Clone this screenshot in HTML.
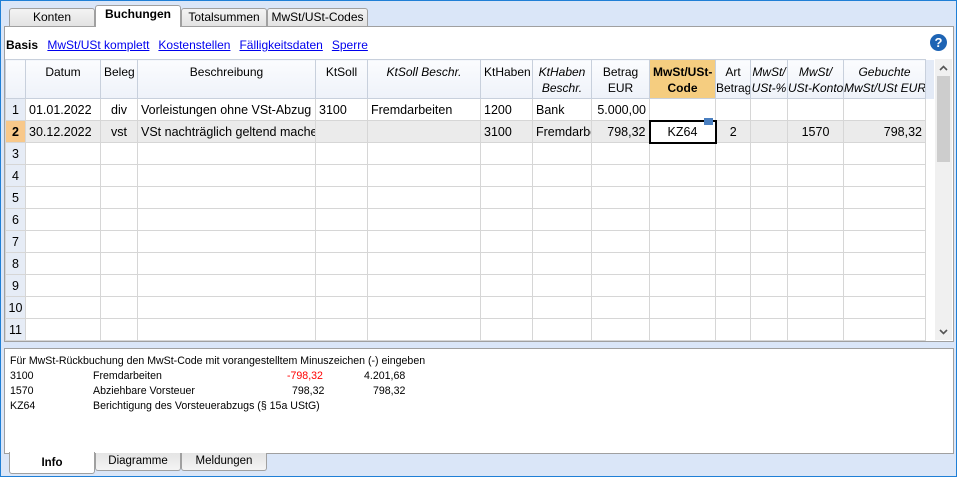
<!DOCTYPE html>
<html><head><meta charset="utf-8"><style>
*{box-sizing:border-box;margin:0;padding:0}
body{width:957px;height:477px;background:#dae6f8;font-family:"Liberation Sans",sans-serif;font-size:12px;color:#000;position:relative;overflow:hidden;border:1px solid #1f7fd6}
.tab{position:absolute;top:7px;height:19px;border:1px solid #a0a0a0;border-bottom:none;background:linear-gradient(#f4f4f4,#e2e2e2);border-radius:3px 3px 0 0;text-align:center;font-size:12px;line-height:17px}
.tab.act{top:4px;height:22px;background:#fff;font-weight:bold;z-index:2}
#main{position:absolute;left:3px;top:25px;width:950px;height:316px;background:#fff;border:1px solid #a0a0a0}
.links{position:absolute;left:5px;top:37px;font-size:12px}
.links b{margin-right:6px}
.links a{color:#0000ee;text-decoration:underline;margin-right:9px}
.help{position:absolute;left:929px;top:33px;width:17px;height:17px;border-radius:50%;background:#1e64b4;color:#fff;font-weight:bold;font-size:13px;text-align:center;line-height:17px}
table{position:absolute;left:4px;top:58px;border-collapse:collapse;table-layout:fixed;width:929px}
td,th{border:1px solid #d6d6d6;height:22px;padding:0 3px;white-space:nowrap;overflow:hidden;font-size:12.5px}
th{height:39px;font-weight:normal;background:linear-gradient(#fbfcfe,#eef2f9);border-color:#c8d0dc;vertical-align:top;padding-top:4px;font-size:12px;line-height:16px}
th.i{font-style:italic}
th.o{background:#f5cd80;font-weight:bold}
td.n{background:#e6ecf6;text-align:center;border-color:#d6d6d6;padding:0}
tr.r2 td{background:#ebebeb}
tr.r2 td.n{background:#f8c88a;font-weight:bold}
.c{text-align:center}.r{text-align:right}
td.sel{background:#fff!important;border:2px solid #000;text-align:center}
#sb{position:absolute;left:934px;top:58px;width:17px;height:281px;background:#f0f0f0}
#thumb{position:absolute;left:936px;top:75px;width:13px;height:86px;background:#cdcdcd}
#info{position:absolute;left:3px;top:347px;width:950px;height:106px;background:#fff;border:1px solid #a0a0a0;font-size:10.6px}
#info div{position:absolute;white-space:nowrap}
.bt{position:absolute;z-index:3;top:452px;height:18px;border:1px solid #a0a0a0;border-top:none;background:linear-gradient(#e4e4e4,#f4f4f4);border-radius:0 0 3px 3px;text-align:center;font-size:11.5px;line-height:16px}
.bt.act{background:#fff;font-weight:bold;top:451px;height:22px;line-height:22px;border-top:none}
</style></head><body>
<div class="tab" style="left:8px;width:86px">Konten</div>
<div class="tab act" style="left:94px;width:86px">Buchungen</div>
<div class="tab" style="left:180px;width:86px">Totalsummen</div>
<div class="tab" style="left:266px;width:101px">MwSt/USt-Codes</div>
<div id="main"></div>
<div class="links"><b>Basis</b> <a>MwSt/USt komplett</a><a>Kostenstellen</a><a>Fälligkeitsdaten</a><a>Sperre</a></div>
<div class="help">?</div>
<table>
<colgroup><col style="width:20px"><col style="width:75px"><col style="width:37px"><col style="width:178px"><col style="width:52px"><col style="width:113px"><col style="width:52px"><col style="width:59px"><col style="width:58px"><col style="width:66px"><col style="width:35px"><col style="width:37px"><col style="width:56px"><col style="width:82px"><col style="width:9px"></colgroup>
<tr><th></th><th>Datum</th><th>Beleg</th><th>Beschreibung</th><th>KtSoll</th><th class="i">KtSoll Beschr.</th><th>KtHaben</th><th class="i">KtHaben<br>Beschr.</th><th>Betrag<br>EUR</th><th class="o">MwSt/USt-<br>Code</th><th style="padding:4px 0 0">Art<br>Betrag</th><th class="i" style="padding:4px 0 0">MwSt/<br>USt-%</th><th class="i" style="padding:4px 0 0">MwSt/<br>USt-Konto</th><th class="i" style="padding:4px 0 0">Gebuchte<br>MwSt/USt EUR</th><th style="border:none;background:#e3eaf6"></th></tr>
<tr><td class="n">1</td><td>01.01.2022</td><td class="c">div</td><td>Vorleistungen ohne VSt-Abzug</td><td>3100</td><td>Fremdarbeiten</td><td>1200</td><td>Bank</td><td class="r">5.000,00</td><td></td><td></td><td></td><td></td><td></td><td style="border:none"></td></tr>
<tr class="r2"><td class="n">2</td><td>30.12.2022</td><td class="c">vst</td><td>VSt nachträglich geltend machen</td><td></td><td></td><td>3100</td><td>Fremdarbeiten</td><td class="r">798,32</td><td class="sel">KZ64</td><td class="c">2</td><td></td><td class="c">1570</td><td class="r">798,32</td><td style="border:none;background:#fff"></td></tr>
<tr><td class="n">3</td><td></td><td></td><td></td><td></td><td></td><td></td><td></td><td></td><td></td><td></td><td></td><td></td><td></td><td style="border:none"></td></tr>
<tr><td class="n">4</td><td></td><td></td><td></td><td></td><td></td><td></td><td></td><td></td><td></td><td></td><td></td><td></td><td></td><td style="border:none"></td></tr>
<tr><td class="n">5</td><td></td><td></td><td></td><td></td><td></td><td></td><td></td><td></td><td></td><td></td><td></td><td></td><td></td><td style="border:none"></td></tr>
<tr><td class="n">6</td><td></td><td></td><td></td><td></td><td></td><td></td><td></td><td></td><td></td><td></td><td></td><td></td><td></td><td style="border:none"></td></tr>
<tr><td class="n">7</td><td></td><td></td><td></td><td></td><td></td><td></td><td></td><td></td><td></td><td></td><td></td><td></td><td></td><td style="border:none"></td></tr>
<tr><td class="n">8</td><td></td><td></td><td></td><td></td><td></td><td></td><td></td><td></td><td></td><td></td><td></td><td></td><td></td><td style="border:none"></td></tr>
<tr><td class="n">9</td><td></td><td></td><td></td><td></td><td></td><td></td><td></td><td></td><td></td><td></td><td></td><td></td><td></td><td style="border:none"></td></tr>
<tr><td class="n">10</td><td></td><td></td><td></td><td></td><td></td><td></td><td></td><td></td><td></td><td></td><td></td><td></td><td></td><td style="border:none"></td></tr>
<tr><td class="n">11</td><td></td><td></td><td></td><td></td><td></td><td></td><td></td><td></td><td></td><td></td><td></td><td></td><td></td><td style="border:none"></td></tr>
</table>
<div style="position:absolute;left:703px;top:117px;width:9px;height:7px;background:#4a7fc0"></div>
<div id="sb"></div><div id="thumb"></div>
<svg style="position:absolute;left:938px;top:64px" width="9" height="6"><path d="M1 5L4.5 1.5L8 5" stroke="#555" stroke-width="1.6" fill="none"/></svg>
<svg style="position:absolute;left:938px;top:328px" width="9" height="6"><path d="M1 1L4.5 4.5L8 1" stroke="#555" stroke-width="1.6" fill="none"/></svg>
<div id="info">
<div style="left:5px;top:6px">Für MwSt-Rückbuchung den MwSt-Code mit vorangestelltem Minuszeichen (-) eingeben</div>
<div style="left:5px;top:21px">3100</div><div style="left:88px;top:21px">Fremdarbeiten</div><div style="left:282px;top:21px;color:#f00">-798,32</div><div style="left:359px;top:21px">4.201,68</div>
<div style="left:5px;top:36px">1570</div><div style="left:88px;top:36px">Abziehbare Vorsteuer</div><div style="left:287px;top:36px">798,32</div><div style="left:368px;top:36px">798,32</div>
<div style="left:5px;top:51px">KZ64</div><div style="left:88px;top:51px">Berichtigung des Vorsteuerabzugs (§ 15a UStG)</div>
</div>
<div class="bt act" style="left:8px;width:86px">Info</div>
<div class="bt" style="left:94px;width:86px">Diagramme</div>
<div class="bt" style="left:180px;width:86px">Meldungen</div>
</body></html>
